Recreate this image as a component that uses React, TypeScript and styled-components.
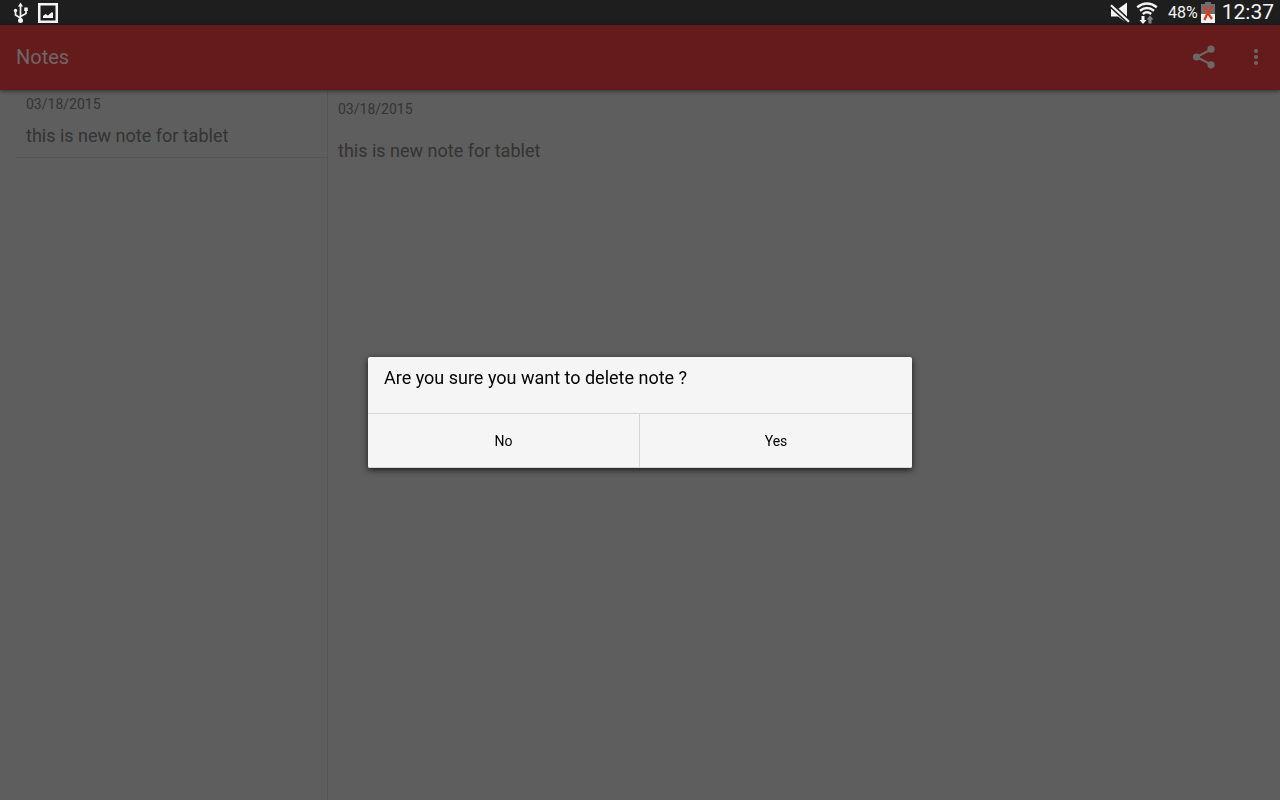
import React from "react";
import styled, { createGlobalStyle } from "styled-components";

const GlobalStyle = createGlobalStyle`
  *, *::before, *::after { box-sizing: border-box; }
  body {
    margin: 0;
    background: #5e5e5e;
    font-family: Roboto, "Liberation Sans", sans-serif;
  }
  h1, p { margin: 0; font-weight: 400; }
`;

const Screen = styled.div`
  min-height: 100vh;
  display: flex;
  flex-direction: column;
`;

const StatusBar = styled.header`
  height: 25px;
  flex: none;
  display: flex;
  align-items: center;
  justify-content: space-between;
  padding: 0 6px 0 11px;
  background: #1e1e1e;
  color: #f4f4f4;
`;

const StatusGroup = styled.div<{ $gap: number }>`
  display: flex;
  align-items: center;
  gap: ${(p) => p.$gap}px;
  svg { display: block; }
`;

const Readings = styled(StatusGroup)`
  padding-left: 4px;
`;

const Battery = styled.span`
  display: flex;
  align-items: center;
  gap: 3px;
  font-size: 16px;
  line-height: 24px;
`;

const Clock = styled.time`
  padding-bottom: 2px;
  font-size: 21px;
  line-height: 24px;
`;

const AppBar = styled.div`
  height: 65px;
  flex: none;
  display: flex;
  align-items: center;
  justify-content: space-between;
  padding: 0 8px 2px 16px;
  background: #651b1b;
  color: #6d6866;
  box-shadow: 0 1px 4px rgba(0, 0, 0, 0.5);
  z-index: 1;
`;

const AppTitle = styled.h1`
  font-size: 20px;
  line-height: 24px;
`;

const Actions = styled.div`
  display: flex;
  align-items: center;
  gap: 20px;
`;

const IconButton = styled.button`
  width: 32px;
  height: 32px;
  display: flex;
  align-items: center;
  justify-content: center;
  padding: 0;
  border: 0;
  background: none;
  color: inherit;
`;

const Panes = styled.main`
  flex: 1;
  display: grid;
  grid-template-columns: 328px 1fr;
  color: #333333;
`;

const NoteList = styled.section`
  padding-left: 16px;
  border-right: 1px solid #545454;
`;

const NoteItem = styled.article`
  padding: 4px 10px 9px;
  border-bottom: 1px solid #545454;
`;

const NoteDetail = styled.section`
  padding: 9px 10px;
`;

const NoteDate = styled.p<{ $space: number }>`
  margin-bottom: ${(p) => p.$space}px;
  font-size: 14px;
  line-height: 20px;
`;

const NoteText = styled.p`
  font-size: 18px;
  line-height: 24px;
`;

const Overlay = styled.div`
  position: fixed;
  inset: 25px 0 0;
  z-index: 2;
  display: flex;
  align-items: center;
  justify-content: center;
`;

const Dialog = styled.div`
  width: 544px;
  max-width: 90%;
  border-radius: 2px;
  background: #f5f5f5;
  color: #000000;
  box-shadow: 0 2px 6px rgba(0, 0, 0, 0.75);
  overflow: hidden;
`;

const DialogMessage = styled.p`
  padding: 9px 16px 23px;
  font-size: 18px;
  line-height: 24px;
`;

const DialogButtons = styled.div`
  display: grid;
  grid-template-columns: 1fr 1fr;
  border-top: 1px solid #d6d6d6;
  border-bottom: 1px solid #d6d6d6;
`;

const DialogButton = styled.button`
  height: 53px;
  padding: 0;
  border: 0;
  background: none;
  color: inherit;
  font: 400 14px/20px Roboto, "Liberation Sans", sans-serif;

  &:first-child { border-right: 1px solid #d6d6d6; }
`;

const UsbIcon = () => (
  <svg width="18" height="21" viewBox="0 0 18 21" fill="none" stroke="#f4f4f4" strokeWidth="1.700">
    <path d="M9.500 4V18M9.500 16L4.500 13V9M9.500 14.500L15 11.500V8" />
    <path d="M9.500 0.500L12 4.500H7Z" fill="#f4f4f4" stroke="none" />
    <circle cx="9.500" cy="18.500" r="2.500" fill="#f4f4f4" stroke="none" />
    <circle cx="4.500" cy="8.500" r="1.700" fill="#f4f4f4" stroke="none" />
    <path d="M13.200 5.500H16.800V9H13.200Z" fill="#f4f4f4" stroke="none" />
  </svg>
);

const PictureIcon = () => (
  <svg width="20" height="20" viewBox="0 0 20 20">
    <rect x="1.250" y="1.250" width="17.500" height="17.500" fill="none" stroke="#f4f4f4" strokeWidth="2.500" />
    <path d="M5 15V13L7.500 11L10 12.500L14 9L15 10V15Z" fill="#f4f4f4" />
  </svg>
);

const MutedIcon = () => (
  <svg width="20" height="22" viewBox="0 0 20 22">
    <path d="M1 7H8L17 0.500V21L8 14.500H1Z" fill="#f4f4f4" />
    <path d="M-1 1.300L20 20.700" stroke="#1e1e1e" strokeWidth="5.200" />
    <path d="M1 3.200L19 19.800" stroke="#f4f4f4" strokeWidth="2.200" />
  </svg>
);

const WifiIcon = () => (
  <svg width="22" height="22" viewBox="0 0 22 22">
    <g fill="none" stroke="#f4f4f4" strokeWidth="2.400">
      <path d="M1.200 5.200Q11 -2.200 20.800 5.200" />
      <path d="M4 8.700Q11 3.200 18 8.700" />
      <path d="M6.800 12Q11 8.600 15.200 12" />
    </g>
    <path d="M5.500 14H8.500V18H10.500L7 22L3.500 18H5.500Z" fill="#f4f4f4" />
    <path d="M12.500 21.500V17.500H10.500L14 13.500L17.500 17.500H15.500V21.500Z" fill="#858585" />
  </svg>
);

const BatteryIcon = () => (
  <svg width="14" height="21" viewBox="0 0 14 21">
    <path d="M4 0H10V2H14V13H0V2H4Z" fill="#6e6e6e" />
    <path d="M0 12H14V21H0Z" fill="#f4f4f4" />
    <path d="M3 5Q6.500 11 11 17M11.500 4.500Q7 9 3.500 18" fill="none" stroke="#e03a18" strokeWidth="2.300" />
  </svg>
);

const ShareIcon = () => (
  <svg width="24" height="24" viewBox="0 0 24 24" fill="currentColor">
    <path d="M19 4.500L4.500 12L19 19.500" fill="none" stroke="currentColor" strokeWidth="2" />
    <circle cx="19" cy="4.200" r="3.600" />
    <circle cx="4.500" cy="12" r="3.600" />
    <circle cx="19" cy="19.800" r="3.600" />
  </svg>
);

const MoreIcon = () => (
  <svg width="6" height="18" viewBox="0 0 6 18" fill="currentColor">
    <circle cx="3" cy="3" r="2.100" />
    <circle cx="3" cy="9" r="2.100" />
    <circle cx="3" cy="15" r="2.100" />
  </svg>
);

const note = { date: "03/18/2015", text: "this is new note for tablet" };

export default function App() {
  return (
    <Screen>
      <GlobalStyle />
      <StatusBar>
        <StatusGroup $gap={9}>
          <UsbIcon />
          <PictureIcon />
        </StatusGroup>
        <StatusGroup $gap={6}>
          <MutedIcon />
          <WifiIcon />
          <Readings $gap={7}>
            <Battery>
              48%
              <BatteryIcon />
            </Battery>
            <Clock>12:37</Clock>
          </Readings>
        </StatusGroup>
      </StatusBar>
      <AppBar>
        <AppTitle>Notes</AppTitle>
        <Actions>
          <IconButton aria-label="Share">
            <ShareIcon />
          </IconButton>
          <IconButton aria-label="More options">
            <MoreIcon />
          </IconButton>
        </Actions>
      </AppBar>
      <Panes>
        <NoteList>
          <NoteItem>
            <NoteDate $space={10}>{note.date}</NoteDate>
            <NoteText>{note.text}</NoteText>
          </NoteItem>
        </NoteList>
        <NoteDetail>
          <NoteDate $space={20}>{note.date}</NoteDate>
          <NoteText>{note.text}</NoteText>
        </NoteDetail>
      </Panes>
      <Overlay>
        <Dialog role="alertdialog" aria-modal="true" aria-labelledby="delete-message">
          <DialogMessage id="delete-message">Are you sure you want to delete note ?</DialogMessage>
          <DialogButtons>
            <DialogButton>No</DialogButton>
            <DialogButton>Yes</DialogButton>
          </DialogButtons>
        </Dialog>
      </Overlay>
    </Screen>
  );
}
